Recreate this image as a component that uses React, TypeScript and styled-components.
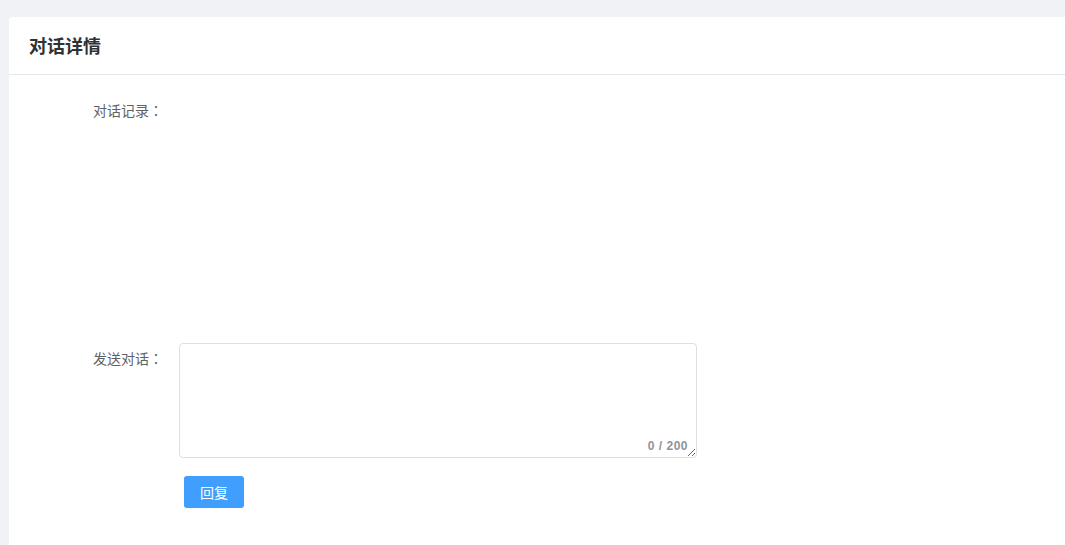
import styled, { createGlobalStyle } from 'styled-components'

const GlobalStyle = createGlobalStyle`
  html, body {
    margin: 0;
    padding: 0;
    background: #f0f2f5;
    overflow: hidden;
  }
  body {
    font-family: "Liberation Sans", "Noto Sans CJK SC", sans-serif;
    color: #606266;
  }
`

const Page = styled.div`
  padding: 17px 0 0 9px;
  min-height: 545px;
  box-sizing: border-box;
`

const Card = styled.div`
  background: #fff;
  border-radius: 4px;
  margin-right: -20px;
  min-height: 540px;
`

const CardHeader = styled.div`
  height: 58px;
  box-sizing: border-box;
  padding: 0 20px 1px;
  display: flex;
  align-items: center;
  border-bottom: 1px solid #e4e7ed;
`

const Title = styled.h2`
  margin: 0;
  font-size: 18px;
  font-weight: 700;
  color: #303133;
`

const CardBody = styled.div`
  padding: 20px;
`

const FormItem = styled.div<{ $gap?: number }>`
  display: flex;
  margin-bottom: ${(p) => p.$gap ?? 18}px;
`

const Label = styled.label`
  width: 150px;
  flex-shrink: 0;
  box-sizing: border-box;
  padding-right: 16px;
  text-align: right;
  font-size: 14px;
  line-height: 30px;
  color: #606266;
`

const Colon = styled.span`
  font-family: "Noto Sans CJK JP", sans-serif;
`

const Content = styled.div<{ $height?: number }>`
  flex: 1;
  min-height: ${(p) => p.$height ?? 32}px;
`

const TextareaWrap = styled.div`
  position: relative;
  width: 518px;
`

const Textarea = styled.textarea`
  display: block;
  width: 100%;
  height: 115px;
  box-sizing: border-box;
  padding: 5px 15px;
  border: 1px solid #dcdfe6;
  border-radius: 4px;
  font-family: inherit;
  font-size: 14px;
  color: #606266;
  outline: none;
  resize: vertical;
`

const Counter = styled.span`
  position: absolute;
  right: 9px;
  bottom: 5px;
  font-size: 12px;
  font-weight: 600;
  letter-spacing: 0.5px;
  color: #909399;
  background: #fff;
  line-height: 14px;
`

const Button = styled.button`
  margin-left: 5px;
  width: 60px;
  height: 32px;
  border: none;
  border-radius: 3px;
  background: #409eff;
  color: #fff;
  font-family: inherit;
  font-size: 14px;
  cursor: pointer;
`

export default function App() {
  return (
    <>
      <GlobalStyle />
      <Page>
        <Card>
          <CardHeader>
            <Title>对话详情</Title>
          </CardHeader>
          <CardBody>
            <FormItem>
              <Label>对话记录<Colon>：</Colon></Label>
              <Content $height={230} />
            </FormItem>
            <FormItem>
              <Label>发送对话<Colon>：</Colon></Label>
              <Content>
                <TextareaWrap>
                  <Textarea maxLength={200} />
                  <Counter>0 / 200</Counter>
                </TextareaWrap>
              </Content>
            </FormItem>
            <FormItem>
              <Label />
              <Content>
                <Button>回复</Button>
              </Content>
            </FormItem>
          </CardBody>
        </Card>
      </Page>
    </>
  )
}
